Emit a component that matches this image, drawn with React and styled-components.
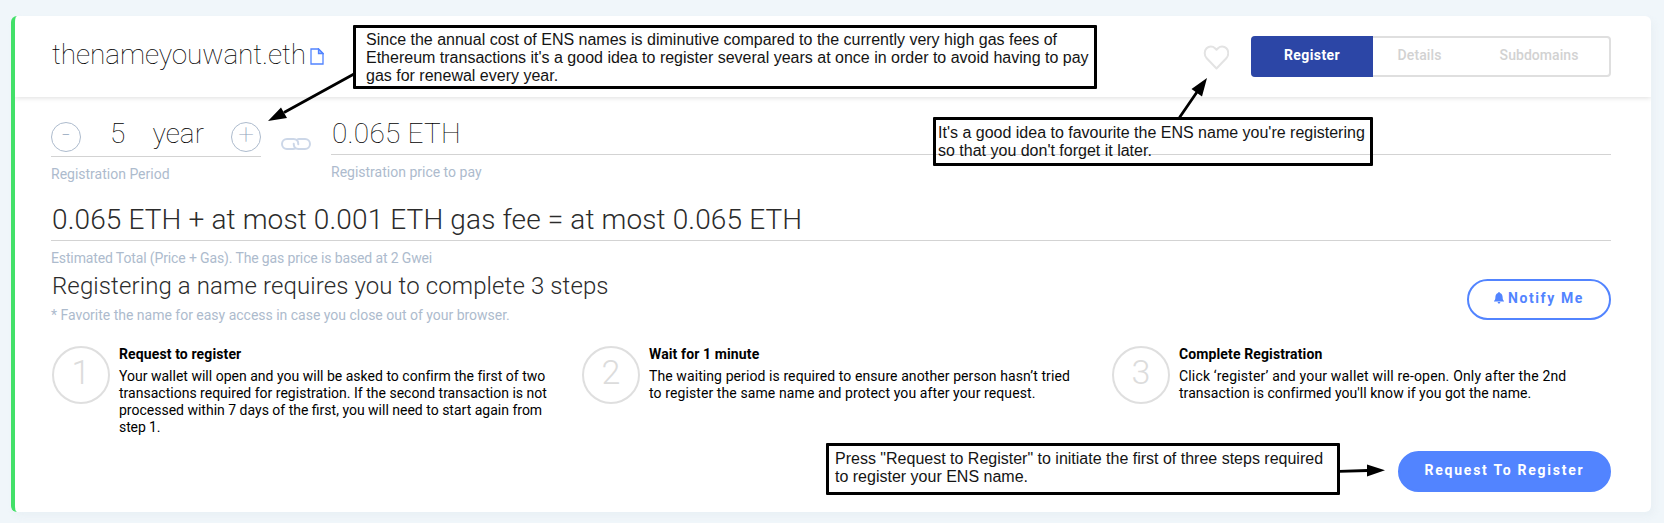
import React from "react";
import styled, { createGlobalStyle } from "styled-components";

const Global = createGlobalStyle`
  * { box-sizing: border-box; }
  body {
    margin: 0;
    background: #f0f6fa;
    font-family: Roboto, "Liberation Sans", sans-serif;
    color: #2b2b2b;
    overflow: hidden;
  }
  h2, h3, p { margin: 0; font-weight: inherit; }
  button { font-family: inherit; padding: 0; margin: 0; }
`;

const Page = styled.main`
  position: relative;
  width: 1664px;
  height: 523px;
  padding: 16px 13px 0 11px;
`;

const Card = styled.section`
  height: 496px;
  width: 1640px;
  display: flex;
  flex-direction: column;
  background: #fff;
  border-left: 4px solid #42e068;
  border-radius: 6px;
  box-shadow: 3px 4px 6px rgba(229, 236, 241, 0.6);
`;

const Header = styled.header`
  display: flex;
  align-items: center;
  height: 81px;
  flex: none;
  padding: 0 40px 0 36px;
  box-shadow: 0 1px 5px rgba(0, 0, 0, 0.13);
  clip-path: inset(0 0 -10px 0);
`;

const Name = styled.h2`
  display: flex;
  align-items: center;
  flex: 1;
  font-size: 28px;
  font-weight: 100;
  line-height: 30px;
  padding: 0 0 4px 1px;
  letter-spacing: -0.1px;
  color: #000;
  svg { margin: 3px 0 0 4px; }
`;

const Heart = styled.svg`
  margin-right: 22px;
`;

const Tabs = styled.nav`
  display: flex;
  width: 360px;
  height: 41px;
  border: 2px solid #dfdfdf;
  border-radius: 4px;
`;

const Tab = styled.button`
  flex: none;
  width: ${(p) => p.$width}px;
  height: 41px;
  margin: ${(p) => (p.$active ? "-2px 0 0 -2px" : "-2px 0 0")};
  padding: 0 ${(p) => p.$right || 0}px 3px 0;
  border: 0;
  border-radius: 4px 0 0 4px;
  background: ${(p) => (p.$active ? "#2c46a6" : "transparent")};
  color: ${(p) => (p.$active ? "#fff" : "#d2d2d2")};
  font-size: 14px;
  font-weight: ${(p) => (p.$active ? 700 : 500)};
  letter-spacing: ${(p) => p.$spacing}px;
`;

const Body = styled.div`
  display: flex;
  flex-direction: column;
  padding: 0 40px 0 36px;
`;

const Pricer = styled.div`
  display: flex;
  align-items: flex-start;
  height: 93px;
`;

const Field = styled.div`
  width: ${(p) => p.$width || "auto"};
  flex: ${(p) => (p.$grow ? 1 : "none")};
`;

const Value = styled.div`
  display: flex;
  align-items: flex-end;
  height: ${(p) => p.$height}px;
  padding: 0 0 ${(p) => p.$bottom}px ${(p) => p.$left || 0}px;
  border-bottom: 1px solid #d3d3d3;
  font-size: 28px;
  line-height: 30px;
  font-weight: ${(p) => p.$weight};
  letter-spacing: ${(p) => p.$spacing || 0}px;
  color: ${(p) => (p.$weight === 100 ? "#000" : "#2b2b2b")};
  white-space: pre;
`;

const Label = styled.p`
  margin-top: ${(p) => p.$top}px;
  font-size: 14px;
  line-height: 20px;
  color: #adbbcd;
  letter-spacing: ${(p) => p.$spacing || 0}px;
`;

const Round = styled.button`
  display: grid;
  place-items: center;
  width: 30px;
  height: 30px;
  border: 1px solid #adbbcd;
  border-radius: 50%;
  background: none;
  color: #8fa3bb;
  font-size: 28px;
  line-height: 20px;
  font-weight: 100;
  padding-bottom: 4px;
`;

const Years = styled.div`
  display: flex;
  justify-content: space-between;
  flex: 1;
  padding: 0 27px 3px 29px;
`;

const LinkIcon = styled.svg`
  margin: 41px 20px 0;
  flex: none;
`;

const Intro = styled.div`
  display: flex;
  justify-content: space-between;
  height: 76px;
  padding-top: 4px;
`;

const Title = styled.h3`
  font-size: 24px;
  font-weight: 300;
  line-height: 28px;
  letter-spacing: 0.11px;
  padding-left: 1px;
`;

const Pill = styled.button`
  display: flex;
  align-items: center;
  justify-content: center;
  gap: 4px;
  width: ${(p) => p.$width}px;
  height: 41px;
  margin-top: ${(p) => p.$top || 0}px;
  padding: 0 0 4px;
  border: 2px solid #5284ff;
  border-radius: 21px;
  background: ${(p) => (p.$filled ? "#5284ff" : "#fff")};
  color: ${(p) => (p.$filled ? "#fff" : "#5284ff")};
  font-size: 14px;
  font-weight: 700;
  letter-spacing: ${(p) => p.$spacing}px;
`;

const Steps = styled.div`
  display: grid;
  grid-template-columns: repeat(3, 530px);
  height: 107px;
  padding-left: 1px;
`;

const Step = styled.article`
  display: flex;
`;

const Digit = styled.div`
  display: grid;
  place-items: center;
  flex: none;
  width: 58px;
  height: 58px;
  margin: 2px 9px 0 0;
  padding-bottom: 7px;
  border: 2px solid #dfdfdf;
  border-radius: 50%;
  font-size: 34px;
  font-weight: 300;
  line-height: 40px;
  color: #dcdcdc;
`;

const StepTitle = styled.h3`
  font-size: 14px;
  font-weight: 700;
  line-height: 20px;
  margin-bottom: 4px;
  color: #000;
  letter-spacing: 0.12px;
`;

const Line = styled.p`
  font-size: 14px;
  line-height: 17px;
  color: #000;
  white-space: nowrap;
  letter-spacing: ${(p) => p.$spacing}px;
`;

const Actions = styled.div`
  display: flex;
  justify-content: flex-end;
`;

const Note = styled.aside`
  position: absolute;
  left: ${(p) => p.$x}px;
  top: ${(p) => p.$y}px;
  width: ${(p) => p.$w}px;
  height: ${(p) => p.$h}px;
  padding: ${(p) => p.$pad};
  border: 3px solid #000;
  border-radius: 1px;
  color: #141414;
  font: 16px/18px "Liberation Sans", Arial, sans-serif;
  white-space: pre;
`;

const Arrows = styled.svg`
  position: absolute;
  left: 0;
  top: 0;
  pointer-events: none;
`;

const steps = [
  {
    title: "Request to register",
    lines: [
      ["Your wallet will open and you will be asked to confirm the first of two", 0.01],
      ["transactions required for registration. If the second transaction is not", 0.01],
      ["processed within 7 days of the first, you will need to start again from", 0],
      ["step 1.", -0.1],
    ],
  },
  {
    title: "Wait for 1 minute",
    lines: [
      ["The waiting period is required to ensure another person hasn’t tried", 0.09],
      ["to register the same name and protect you after your request.", 0.1],
    ],
  },
  {
    title: "Complete Registration",
    lines: [
      ["Click ‘register’ and your wallet will re-open. Only after the 2nd", 0.17],
      ["transaction is confirmed you'll know if you got the name.", 0.04],
    ],
  },
];

export default function App() {
  return (
    <Page>
      <Global />
      <Card>
        <Header>
          <Name>
            thenameyouwant.eth
            <svg width="14" height="17" viewBox="0 0 14 17" fill="none" stroke="#5284ff" strokeWidth="1.3">
              <path d="M1 1h7.5L13 5.5V16H1z" />
              <path d="M8.5 1v4.5H13z" fill="#a9c2ff" />
            </svg>
          </Name>
          <Heart width="26" height="26" viewBox="0 0 26 26" fill="none" stroke="#e3e3e3" strokeWidth="2" strokeLinejoin="round">
            <path d="M13.500 24.500 3.700 14.200C1 11.300 1.200 6.800 3.600 4.300 6 1.800 9.700 1.900 12 4.200L13.500 5.800 15 4.200c2.300-2.300 6-2.400 8.400.1 2.400 2.500 2.600 7-.1 9.900z" />
          </Heart>
          <Tabs>
            <Tab $active $width={122} $spacing={0.4}>Register</Tab>
            <Tab $width={96} $right={3} $spacing={0.1}>Details</Tab>
            <Tab $width={140} $spacing={0.05}>Subdomains</Tab>
          </Tabs>
        </Header>

        <Body>
          <Pricer>
            <Field $width="210px">
              <Value $height={60} $bottom={4} $weight={100}>
                <Round>-</Round>
                <Years>
                  <span>5</span>
                  <span>year</span>
                </Years>
                <Round>+</Round>
              </Value>
              <Label $top={7}>Registration Period</Label>
            </Field>
            <LinkIcon width="30" height="12" viewBox="0 0 30 12" fill="none" stroke="#ccd7e8" strokeWidth="2" strokeLinecap="round">
              <path d="M17.300 6.200C17.300 3 15.500 1 12.500 1H6a5 5 0 0 0 0 10h6c.9 0 1.700-.2 2.300-.6" />
              <path d="M12.700 5.800c0 3.200 1.800 5.200 4.800 5.200H24a5 5 0 0 0 0-10h-6c-.4 0-.8 0-1.100.1" />
            </LinkIcon>
            <Field $grow>
              <Value $height={58} $bottom={5} $left={1} $weight={100} $spacing={0.25}>0.065 ETH</Value>
              <Label $top={7}>Registration price to pay</Label>
            </Field>
          </Pricer>

          <Field>
            <Value $height={51} $bottom={5} $left={1} $weight={300} $spacing={0.13}>
              0.065 ETH + at most 0.001 ETH gas fee = at most 0.065 ETH
            </Value>
            <Label $top={7} $spacing={-0.13}>
              Estimated Total (Price + Gas). The gas price is based at 2 Gwei
            </Label>
          </Field>

          <Intro>
            <div>
              <Title>Registering a name requires you to complete 3 steps</Title>
              <Label $top={5} $spacing={-0.01}>* Favorite the name for easy access in case you close out of your browser.</Label>
            </div>
            <Pill $width={144} $top={7} $spacing={1.6}>
              <svg width="10" height="12" viewBox="0 0 10 12" fill="#5284ff">
                <path d="M5 0c.6 0 .9.4.9.9C7.700 1.400 8.600 3 8.600 5c0 2 .4 3 1.400 4v.6H0V9c1-1 1.400-2 1.400-4 0-2 .9-3.600 2.700-4.100C4.100.4 4.400 0 5 0zM3.700 10h2.600C6.300 11 5.700 11.600 5 11.600S3.700 11 3.700 10z" />
              </svg>
              <span>Notify Me</span>
            </Pill>
          </Intro>

          <Steps>
            {steps.map((s, i) => (
              <Step key={s.title}>
                <Digit>{i + 1}</Digit>
                <div>
                  <StepTitle>{s.title}</StepTitle>
                  {s.lines.map(([text, spacing]) => (
                    <Line key={text} $spacing={spacing}>{text}</Line>
                  ))}
                </div>
              </Step>
            ))}
          </Steps>

          <Actions>
            <Pill $filled $width={213} $spacing={1.75}>Request To Register</Pill>
          </Actions>
        </Body>
      </Card>

      <Note $x={353} $y={25} $w={744} $h={64} $pad="3px 0 0 10px">
        {"Since the annual cost of ENS names is diminutive compared to the currently very high gas fees of\nEthereum transactions it's a good idea to register several years at once in order to avoid having to pay\ngas for renewal every year."}
      </Note>
      <Note $x={933} $y={117} $w={440} $h={49} $pad="4px 0 0 2px">
        {"It's a good idea to favourite the ENS name you're registering\nso that you don't forget it later."}
      </Note>
      <Note $x={826} $y={443} $w={514} $h={52} $pad="4px 0 0 6px">
        {'Press "Request to Register" to initiate the first of three steps required\nto register your ENS name.'}
      </Note>
      <Arrows width="1664" height="523" viewBox="0 0 1664 523" stroke="#000" strokeWidth="2.8">
        <path d="M354 74 284 112.500M1179.500 117.500 1197 92M1339 471.300 1368 470.500" />
        <path stroke="none" d="M268 121 281 107.500 287 118zM1207 78 1191.500 89 1202 96.500zM1385 470.300 1367 464.500V476.500z" />
      </Arrows>
    </Page>
  );
}
